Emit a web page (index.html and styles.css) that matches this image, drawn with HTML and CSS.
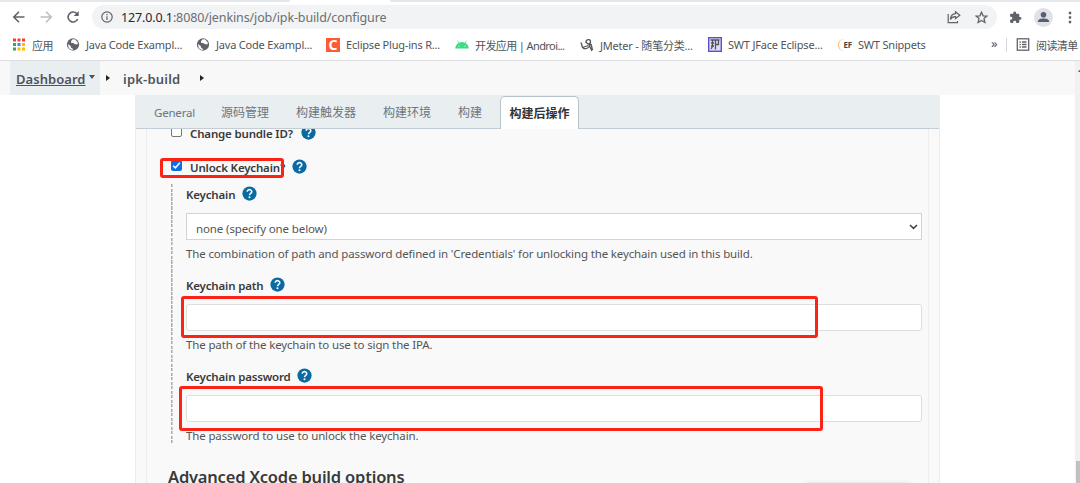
FILE: index.html
```html
<!DOCTYPE html>
<html lang="zh-CN">
<head>
<meta charset="utf-8">
<title>ipk-build Config [Jenkins]</title>
<link rel="stylesheet" href="styles.css">
</head>
<body>
<svg class="defs" width="0" height="0">
  <symbol id="help" viewBox="0 0 16 16"><circle cx="8" cy="8" r="7.6" fill="#0b6aa2"/><path d="M5.6 6.1a2.4 2.2 0 1 1 3.7 1.8C8.400 8.500 8 8.900 8 9.800" fill="none" stroke="#fff" stroke-width="1.700"/><circle cx="8" cy="12" r="1.100" fill="#fff"/></symbol>
  <symbol id="globe" viewBox="0 0 14 14"><circle cx="7" cy="7" r="6.600" fill="#5f6368"/><path d="M1.500 6.500 4.500 8.500 5 10.500 7.500 12.200 6 13 2.500 11ZM6 1.500 9 1.300 10.500 3 12.400 5 11.600 7 8.500 6.500 7.500 5.300 5 5.500 5 3.500Z" fill="#fff"/></symbol>
</svg>
<div class="window">
  <div class="tabstrip"><span class="strip-left"></span><span class="strip-mid"></span><span class="strip-right"></span></div>
  <div class="toolbar">
    <div class="nav">
      <svg width="14" height="14" viewBox="0 0 14 14"><path d="M12.500 7H2M7 1.800 1.800 7 7 12.200" class="line dark"/></svg>
      <svg width="14" height="14" viewBox="0 0 14 14"><path d="M1.500 7H12M7 1.800 12.200 7 7 12.200" class="line light"/></svg>
      <svg width="14" height="14" viewBox="0 0 14 14"><path d="M11.700 9A5 5 0 1 1 10.700 3.500L12 5" class="line dark"/><path d="M12.700 1V6H7.700Z" fill="#5f6368"/></svg>
    </div>
    <div class="address">
      <svg width="12" height="12" viewBox="0 0 12 12"><circle cx="6" cy="6" r="5.200" class="line thin"/><path d="M6 5.300V9M6 3V4.300" class="line thin"/></svg>
      <span class="url"><b>127.0.0.1</b>:8080/jenkins/job/ipk-build/configure</span>
      <svg class="share" width="14" height="14" viewBox="0 0 14 14"><path d="M1.200 4V12.700H10.500V11" class="line thin"/><path d="M8.500 1.800 12.800 5.200 8.500 8.500V6.600C6 6.500 4.500 7.300 3.400 9.500 3.600 6.300 5.200 4 8.500 3.700Z" class="line thin"/></svg>
      <svg class="star" width="13" height="13" viewBox="0 0 13 13"><path d="M6.500 1.200 8.100 4.800 12 5.100 9 7.600 9.900 11.500 6.500 9.400 3.100 11.500 4 7.600 1 5.100 4.900 4.800Z" class="line"/></svg>
    </div>
    <svg class="puzzle" width="13" height="13" viewBox="0 0 24 24"><path d="M20.500 11H19V7a2 2 0 0 0-2-2h-4V3.500a2.500 2.500 0 0 0-5 0V5H4a2 2 0 0 0-2 2v3.800h1.500a2.700 2.700 0 0 1 0 5.400H2V20a2 2 0 0 0 2 2h3.800v-1.500a2.700 2.700 0 0 1 5.400 0V22H17a2 2 0 0 0 2-2v-4h1.500a2.500 2.500 0 0 0 0-5Z" fill="#5f6368"/></svg>
    <svg class="avatar" width="19" height="19" viewBox="0 0 19 19"><circle cx="9.500" cy="9.500" r="9.400" fill="#dfe1e6"/><circle cx="9.500" cy="6.800" r="2.800" fill="#565f70"/><path d="M4 14V13C4 11.300 7 10.500 9.500 10.500S15 11.300 15 13V14Z" fill="#565f70"/></svg>
    <svg class="dots" width="4" height="13" viewBox="0 0 4 13"><path d="M.8.800h2.400v2.400H.8zM.8 5.300h2.400v2.400H.8zM.8 9.800h2.400v2.400H.8z" fill="#5f6368"/></svg>
  </div>
  <div class="bookmarks">
    <a class="bm apps"><svg width="13" height="13" viewBox="0 0 13 13"><path d="M.5.500h3v3h-3zM5 .5h3v3H5zM9.500.500h3v3h-3z" fill="#ea4335"/><path d="M.5 5h3v3h-3zM.5 9.500h3v3h-3z" fill="#34a853"/><path d="M5 5h3v3H5z" fill="#4285f4"/><path d="M9.500 5h3v3h-3zM5 9.500h3v3H5zM9.500 9.500h3v3h-3z" fill="#fbbc05"/></svg><span>应用</span></a>
    <a class="bm java"><svg width="13" height="13"><use href="#globe"/></svg><span>Java Code Exampl...</span></a>
    <a class="bm java"><svg width="13" height="13"><use href="#globe"/></svg><span>Java Code Exampl...</span></a>
    <a class="bm eclipse"><i class="clogo">C</i><span>Eclipse Plug-ins R...</span></a>
    <a class="bm android"><svg width="14" height="9" viewBox="0 0 14 9"><path d="M.3 8.500A6.700 6.700 0 0 1 3.600 3L2.300.8 2.800.5 4.200 2.700A7 7 0 0 1 9.800 2.700L11.200.5 11.700.8 10.400 3A6.700 6.700 0 0 1 13.700 8.500Z" fill="#3ddc84"/><circle cx="4" cy="6" r=".6" fill="#fff"/><circle cx="10" cy="6" r=".6" fill="#fff"/></svg><span>开发应用 | Androi...</span></a>
    <a class="bm jmeter"><svg width="14" height="14" viewBox="0 0 14 14"><path d="M1 4.500 2.500 9.500 8.500 7.500M6 5C5.500 1 10.500.500 10.500 3.500S7 7 6.500 4M10.500 4 9.500 8 12 13M11 6 12.500 12M3 10C5 11.500 8 10.500 9.700 8" fill="none" stroke="#555" stroke-width="1.300"/></svg><span>JMeter - 随笔分类...</span></a>
    <a class="bm jface"><svg width="14" height="15" viewBox="0 0 14 15"><rect x=".7" y=".7" width="12.600" height="13.600" fill="#dedcf8" stroke="#5b50c8" stroke-width="1.400"/><path d="M2.500 3H11.500M3 6H6M3 9H6M4.500 3V9.500L3 12M7.500 3V12.500M10.500 3V7.500H7.500" fill="none" stroke="#555" stroke-width="1.300"/></svg><span>SWT JFace Eclipse...</span></a>
    <a class="bm snippets"><i class="ef">EF</i><span>SWT Snippets</span></a>
    <span class="more">»</span>
    <span class="sep"></span>
    <a class="bm reading"><svg width="13" height="13" viewBox="0 0 13 13"><rect x=".8" y=".8" width="11.400" height="11.400" class="line"/><path d="M3 4h1.300M3 6.500h1.300M3 9h1.300M5.500 4H10M5.500 6.500H10M5.500 9H10" class="line"/></svg><span>阅读清单</span></a>
  </div>
  <div class="page">
    <div class="content">
      <nav class="crumbs">
        <div class="crumb-home"><b>Dashboard</b><i class="down"></i></div>
        <i class="right first"></i><b class="job">ipk-build</b><i class="right"></i>
      </nav>
      <main class="panel">
        <div class="tabs">
          <span class="tab t1">General</span><span class="tab t2">源码管理</span><span class="tab t3">构建触发器</span><span class="tab t4">构建环境</span><span class="tab t5">构建</span><span class="tab active">构建后操作</span>
        </div>
        <div class="body">
          <div class="section">
            <div class="check cut"><i class="box"></i><b class="w-bundle">Change bundle ID?</b><svg class="help"><use href="#help"/></svg></div>
            <div class="check unlock"><i class="box on"><svg width="11" height="11" viewBox="0 0 11 11"><path d="M2.200 5.700 4.400 7.900 8.800 2.700" fill="none" stroke="#fff" stroke-width="1.600"/></svg></i><b class="w-unlock">Unlock Keychain?</b><svg class="help"><use href="#help"/></svg><div class="mark m1"></div></div>
            <div class="nested">
              <div class="label"><b class="w-key">Keychain</b><svg class="help"><use href="#help"/></svg></div>
              <div class="select"><span>none (specify one below)</span><svg width="9" height="6" viewBox="0 0 9 6"><path d="M1 1 4.500 4.400 8 1" fill="none" stroke="#444" stroke-width="1.500"/></svg></div>
              <div class="desc d1">The combination of path and password defined in 'Credentials' for unlocking the keychain used in this build.</div>
              <div class="label l2"><b class="w-path">Keychain path</b><svg class="help"><use href="#help"/></svg></div>
              <div class="input"><div class="mark m2"></div></div>
              <div class="desc d2">The path of the keychain to use to sign the IPA.</div>
              <div class="label l2"><b class="w-pass">Keychain password</b><svg class="help"><use href="#help"/></svg></div>
              <div class="input"><div class="mark m3"></div></div>
              <div class="desc d3">The password to use to unlock the keychain.</div>
            </div>
            <h2>Advanced Xcode build options</h2>
          </div>
          <div class="savebar"></div>
        </div>
      </main>
    </div>
    <div class="scroll"><i class="up"></i><i class="thumb"></i></div>
  </div>
</div>
</body>
</html>
```

FILE: styles.css
```css
* { box-sizing: border-box; }
body { margin: 0; background: #fff; color: #3a3a3a; font-family: "Noto Sans", "Noto Sans CJK SC", sans-serif; font-size: 12px; }
i { font-style: normal; }
b { font-weight: 600; }
svg { flex: none; display: block; }
.defs { position: absolute; }
.window { width: 1080px; height: 483px; overflow: hidden; display: flex; flex-direction: column; }
.line { fill: none; stroke: #5f6368; stroke-width: 1.3; }
.line.dark { stroke-width: 1.600; }
.line.light { stroke: #bcbec1; stroke-width: 1.600; }
.line.thin { stroke-width: 1.200; }

.tabstrip { display: flex; height: 2px; flex: none; justify-content: space-between; }
.tabstrip span { background: #e4e7ec; }
.strip-left { width: 290px; border-bottom-right-radius: 2px; }
.strip-right { width: 690px; border-bottom-left-radius: 2px; }
.tabstrip .strip-mid { background: #fff; flex: 1; }
.toolbar { height: 28px; flex: none; display: flex; align-items: center; padding: 2px 7px 0 12px; }
.nav { display: flex; gap: 13px; width: 80px; }
.address { width: 905px; height: 24px; margin-top: 0; border-radius: 12px; background: #f1f3f4; display: flex; align-items: center; padding: 0 9px; }
.url { margin-left: 8px; font-size: 12.500px; letter-spacing: -.12px; color: #6b6f73; white-space: nowrap; }
.url b { color: #27292c; font-weight: 400; }
.share { margin-left: auto; }
.star { margin-left: 14px; }
.puzzle { margin-left: 12px; }
.avatar { margin-left: 12px; }
.dots { margin-left: auto; margin-right: 1px; }

.bookmarks { height: 31px; flex: none; display: flex; align-items: center; padding: 0 0 1px 12px; border-bottom: 1px solid #dcdee0; color: #505458; font-size: 11px; letter-spacing: -.2px; }
.bm { display: flex; align-items: center; flex: none; white-space: nowrap; }
.bm > svg, .bm > i { width: 14px; flex: none; }
.bm > span { margin-left: 6px; }
.apps { width: 54px; }
.apps > span { letter-spacing: -.5px; }
.java { width: 130px; }
.eclipse { width: 129px; }
.android { width: 125px; letter-spacing: -.6px; }
.jmeter { width: 128px; }
.jface { width: 130px; }
.snippets { width: 153px; }
.clogo { height: 14px; background: #ff5a36; color: #fff; font: 700 14px/14px "Noto Sans", sans-serif; text-align: center; }
.ef { font: 700 8px/12px "Noto Sans", sans-serif; color: #444; border-radius: 7px; border-left: 1px solid #f3b95f; text-align: right; }
.more { width: 15px; font-size: 13px; line-height: 14px; margin-top: -3px; }
.sep { width: 1px; height: 14px; background: #d5d7da; margin: 0 9px 0 0; }
.reading > span { letter-spacing: -.6px; }

.page { flex: 1; display: flex; min-height: 0; }
.content { width: 1075px; display: flex; flex-direction: column; }
.crumbs { height: 34px; flex: none; background: #f8f8f8; display: flex; align-items: center; padding-left: 10px; font-size: 13px; color: #4d545d; }
.crumb-home { width: 90px; height: 34px; background: #e9eef1; display: flex; align-items: center; padding-left: 6px; }
.crumb-home b { width: 71px; text-decoration: underline; white-space: nowrap; letter-spacing: .05px; }
.crumbs b { padding-top: 1px; }
.down { margin: -3px 0 0 2px; border: 3.500px solid transparent; border-top: 4px solid #4d545d; border-bottom: 0; }
.right { border: 3px solid transparent; border-left: 4px solid #222; border-right: 0; margin-top: -1px; }
.right.first { margin-left: 6px; }
.job { width: 77px; margin-left: 13px; white-space: nowrap; letter-spacing: .2px; }

.panel { width: 805px; margin-left: 135px; flex: 1; min-height: 0; display: flex; flex-direction: column; background: #f9f9f9; border: 1px solid #ededed; border-width: 0 1px; }
.tabs { height: 34px; flex: none; background: #e9eef1; border-bottom: 1px solid #c5cdd4; display: flex; align-items: flex-end; padding-left: 18px; color: #6c757d; }
.tab { height: 33px; line-height: 36px; white-space: nowrap; }
.t1 { width: 67px; font-size: 11.500px; letter-spacing: -.2px; }
.t2 { width: 75px; }
.t3 { width: 87px; }
.t4 { width: 75px; }
.t5 { width: 42px; }
.active { width: 79px; height: 33px; line-height: 33px; margin-bottom: -1px; background: #fff; border: 1px solid #b8c2cb; border-bottom: 0; border-radius: 5px 5px 0 0; text-align: center; font-weight: 700; color: #333; }
.body { flex: 1; min-height: 0; overflow: hidden; padding: 0 10px; position: relative; }
.section { height: 400px; border: 1px solid #ededed; border-width: 0 1px; padding: 1px 6px 0 24px; margin-top: -7px; }
.check { display: flex; align-items: center; height: 20px; position: relative; }
.check b, .label b { white-space: nowrap; font-size: 11.500px; letter-spacing: -.17px; }
.box { width: 11px; height: 11px; margin-right: 8px; border: 1px solid #777; border-radius: 2px; background: #fff; margin-top: -3px; flex: none; }
.box.on { background: #0b70e6; border: 0; }
.help { width: 15px; height: 15px; margin-top: -2px; }
.w-bundle { width: 111px; }
.unlock { margin-top: 14px; }
.w-unlock { width: 102px; }
.unlock .help { margin-top: -1px; }
.nested { margin-top: 7px; height: 260px; padding-left: 15px; background: repeating-linear-gradient(#a9a9a9 0 3px, transparent 3px 4.500px) left top / 1.500px 100% no-repeat; }
.label { display: flex; align-items: center; height: 20px; white-space: nowrap; }
.l2 { margin-top: 11px; }
.w-key { width: 56px; }
.w-path { width: 84px; }
.w-pass { width: 111px; }
.select { margin-top: 9px; height: 27px; border: 1px solid #d3d3d3; background: #fff; display: flex; align-items: center; justify-content: space-between; padding: 3px 3px 0 9px; font-size: 11.500px; letter-spacing: -.12px; color: #555; }
.select svg { margin-top: -3px; }
.input { position: relative; margin-top: 9px; height: 27px; border: 1px solid #dedede; border-radius: 3px; background: #fff; }
.desc { height: 20px; line-height: 20px; margin-top: 4px; color: #555; white-space: nowrap; font-size: 11.500px; letter-spacing: -.14px; }
h2 { margin: 20px 0 0 -3px; font-size: 16.500px; line-height: 26px; font-weight: 600; letter-spacing: -.2px; white-space: nowrap; }
.mark { position: absolute; border: 3px solid #fb2315; border-radius: 3px; }
.m1 { left: -11px; top: 1px; width: 124px; height: 20px; }
.m2 { left: -6px; top: -9px; width: 637px; height: 42px; }
.m3 { left: -8px; top: -10px; width: 644px; height: 45px; }
.savebar { position: absolute; left: 670px; top: 356px; width: 104px; height: 20px; box-shadow: 0 0 5px #aaa; }

.scroll { width: 5px; background: #f1f1f1; display: flex; flex-direction: column; justify-content: space-between; overflow: hidden; }
.up { border: 3px solid transparent; border-bottom: 4px solid #666; border-top: 0; width: 0; margin: 7px 0 0 3px; }
.thumb { height: 22px; margin-left: 1px; background: #c1c1c1; }
```
